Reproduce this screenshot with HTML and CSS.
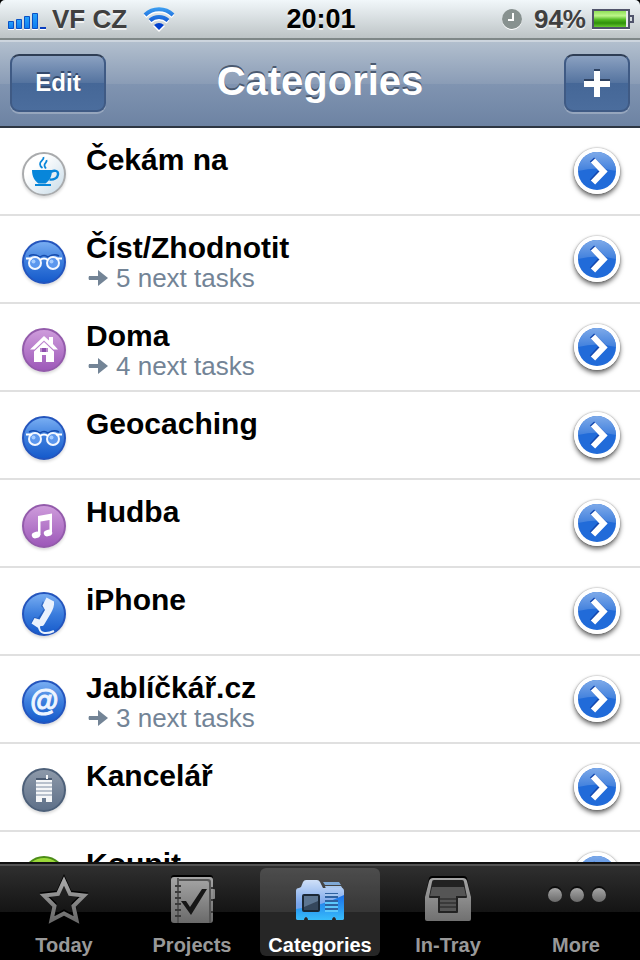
FILE: index.html
```html
<!DOCTYPE html>
<html lang="en">
<head>
  <meta charset="utf-8">
  <meta name="viewport" content="width=device-width, initial-scale=1">
  <title>Categories</title>
  <link rel="stylesheet" href="styles.css">
</head>
<body>
  <!-- shared icons -->
  <svg class="defs" aria-hidden="true">
    <defs>
      <linearGradient id="g-gray" x1="0" y1="0" x2="0" y2="1">
        <stop offset="0" stop-color="#a6a6a6"/><stop offset="1" stop-color="#6a6a6a"/>
      </linearGradient>
      <linearGradient id="g-tray" gradientUnits="userSpaceOnUse" x1="0" y1="3" x2="0" y2="49">
        <stop offset="0" stop-color="#a6a6a6"/><stop offset="1" stop-color="#6e6e6e"/>
      </linearGradient>
      <linearGradient id="g-blue" x1="0" y1="0" x2="0" y2="1">
        <stop offset="0" stop-color="#7bb0f3"/><stop offset=".5" stop-color="#3b7ddd"/><stop offset="1" stop-color="#1459ca"/>
      </linearGradient>
      <linearGradient id="g-purple" x1="0" y1="0" x2="0" y2="1">
        <stop offset="0" stop-color="#cf9ddc"/><stop offset="1" stop-color="#9c57b8"/>
      </linearGradient>
      <linearGradient id="g-white" x1="0" y1="0" x2="1" y2="1">
        <stop offset=".3" stop-color="#ffffff"/><stop offset="1" stop-color="#c6dae7"/>
      </linearGradient>
      <linearGradient id="g-slate" x1="0" y1="0" x2="0" y2="1">
        <stop offset="0" stop-color="#8e9aaa"/><stop offset="1" stop-color="#5d6f88"/>
      </linearGradient>
      <linearGradient id="g-green" x1="0" y1="0" x2="0" y2="1">
        <stop offset="0" stop-color="#a3de3d"/><stop offset="1" stop-color="#4c9a12"/>
      </linearGradient>
      <linearGradient id="g-signal" x1="0" y1="0" x2="0" y2="1">
        <stop offset="0" stop-color="#29a3fb"/><stop offset="1" stop-color="#0b7cf0"/>
      </linearGradient>
      <linearGradient id="g-wifi" gradientUnits="userSpaceOnUse" x1="0" y1="0" x2="0" y2="24">
        <stop offset="0" stop-color="#3fa5f3"/><stop offset="1" stop-color="#0038c8"/>
      </linearGradient>
      <linearGradient id="g-battery" x1="0" y1="0" x2="0" y2="1">
        <stop offset="0" stop-color="#8fe058"/><stop offset=".3" stop-color="#bdf58a"/><stop offset=".55" stop-color="#4fb81e"/><stop offset=".75" stop-color="#2f8f0b"/><stop offset="1" stop-color="#66c92f"/>
      </linearGradient>
      <linearGradient id="g-folder" x1="0" y1="0" x2="0" y2="1">
        <stop offset="0" stop-color="#cfe0f8"/><stop offset=".6" stop-color="#79a5ea"/><stop offset="1" stop-color="#6d9fe9"/>
      </linearGradient>
      <linearGradient id="g-gloss" x1="0" y1="0" x2="0" y2="1">
        <stop offset="0" stop-color="#1b70e8"/><stop offset="1" stop-color="#38bdfb"/>
      </linearGradient>
      <linearGradient id="g-disc" x1="0" y1="0" x2="0" y2="1">
        <stop offset="0" stop-color="#7eaae9"/><stop offset="1" stop-color="#4180dd"/>
      </linearGradient>
    </defs>

    <symbol id="cup" viewBox="0 0 44 44">
      <circle cx="22" cy="22" r="21" fill="url(#g-white)" stroke="#a9abad" stroke-width="2"/>
      <path fill="#0786da" d="M10 18h20c0 7-3 11-6.500 13.500h-7C13 29 10 25 10 18zM13 32h16v2H13z"/>
      <path fill="none" stroke="#0786da" stroke-width="2.400" d="M29 20c4-2.500 7.500-1 7 2.500s-4 5.500-8.500 5"/>
      <path fill="none" stroke="#0786da" stroke-width="1.800" d="M21.500 5c1 3-4 4-3.500 7 0 2 1 3 2.500 4M24.500 8c1 2.500-2.500 3-2 5.500 0 1.500.800 2 1.500 3"/>
    </symbol>

    <symbol id="glasses" viewBox="0 0 44 44">
      <circle cx="22" cy="22" r="21" fill="url(#g-blue)" stroke="#2455bd" stroke-width="2"/>
      <path fill="none" stroke="#164cae" stroke-width="1.500" d="M7 16q5-3 11 1 4-3 8 0 6-4 11-1"/>
      <g fill="#5b97ee" stroke="#f2f7ff" stroke-width="2">
        <circle cx="13" cy="23" r="6"/>
        <circle cx="31" cy="23" r="6"/>
      </g>
      <path fill="none" stroke="#fff" stroke-width="1.800" d="M4 18.500h6M34 18.500h6M18 20q4-3 8 0"/>
      <circle cx="11.500" cy="21.500" r="2" fill="#a5ccff"/><circle cx="29.500" cy="21.500" r="2" fill="#a5ccff"/>
    </symbol>

    <symbol id="house" viewBox="0 0 44 44">
      <circle cx="22" cy="22" r="21" fill="url(#g-purple)" stroke="#935bab" stroke-width="2"/>
      <path fill="#fff" d="M22 8l5 4.500V9h4v7l5 5.500h-4.500L22 12.500l-9.500 9H8z"/>
      <path fill="#fff" d="M22 14l10 9.500V34h-8v-7h-4v7h-8V23.500z"/>
      <path fill="#b98acb" d="M18 20h8v4h-8z"/>
      <path fill="#8f4fae" d="M20 20h4v4h-4z"/>
    </symbol>

    <symbol id="note" viewBox="0 0 44 44">
      <circle cx="22" cy="22" r="21" fill="url(#g-purple)" stroke="#935bab" stroke-width="2"/>
      <path fill="#fff" d="M16 12l14-2.500V29h-2.500V16l-9 1.500V31H16z"/>
      <ellipse cx="14" cy="31" rx="4.300" ry="3.200" fill="#fff" transform="rotate(-15 14 31)"/>
      <ellipse cx="26" cy="29" rx="4.300" ry="3.200" fill="#fff" transform="rotate(-15 26 29)"/>
    </symbol>

    <symbol id="phone" viewBox="0 0 44 44">
      <circle cx="22" cy="22" r="21" fill="url(#g-blue)" stroke="#2455bd" stroke-width="2"/>
      <path fill="#164cae" d="M21 9l-2 5 3 3-6 9-4-1-3 6 4 1 5-4 6-12z" opacity=".6"/>
      <path fill="#eaf2fd" d="M24.500 5.500L32 9.500c.500 4-1 8-3 11.500l-6.500 11c-1 2-2.500 2.300-4 2L17 36.500l-7.500-5 3-5.500 5 1.500L23 18l-2.500-4.500z"/>
      <path fill="none" stroke="#eaf2fd" stroke-width="2" d="M17 35c.500 6 6 8 15 4"/>
    </symbol>

    <symbol id="at" viewBox="0 0 44 44">
      <circle cx="22" cy="22" r="21" fill="url(#g-blue)" stroke="#2455bd" stroke-width="2"/>
      <text class="at-sign" x="22" y="31" text-anchor="middle">@</text>
    </symbol>

    <symbol id="office" viewBox="0 0 44 44">
      <circle cx="22" cy="22" r="21" fill="url(#g-slate)" stroke="#4d6079" stroke-width="2"/>
      <path fill="#4c5c72" d="M14 10h16v2H14z"/>
      <path fill="#b8c1cd" d="M14 12h16v18H14z"/>
      <path fill="#f4f6f8" d="M24 7h2v4h-2zM14 12h16v2H14zM14 16h16v2H14zM14 20h16v2H14zM14 24h16v2H14zM14 28h16v6h-6v-4h-4v4h-6z"/>
    </symbol>

    <symbol id="cart" viewBox="0 0 44 44">
      <circle cx="22" cy="22" r="21" fill="url(#g-green)" stroke="#4b8c17" stroke-width="2"/>
      <path fill="none" stroke="#fff" stroke-width="2" d="M9 14h5l4 14h13l4-11H15"/>
    </symbol>

    <symbol id="arrow" viewBox="0 0 20 16">
      <path fill="#738496" d="M1 6h9V0l10 8-10 8v-6H1q-1-2 0-4z"/>
    </symbol>

    <symbol id="chevron" viewBox="0 0 46 46">
      <circle cx="23" cy="23" r="23" fill="#fff"/>
      <circle cx="23" cy="23" r="19" fill="#216bd9"/>
      <path fill="url(#g-disc)" d="M4 23a19 19 0 0 1 38 0q-19-5-38 0z"/>
      <path fill="none" stroke="#1549b0" stroke-width="6" d="M18 11.500L28.500 22 18 33.500"/>
      <path fill="none" stroke="#fff" stroke-width="6" d="M19 12.500L29.500 23.500 19 34.500"/>
    </symbol>
  </svg>

  <header class="status">
    <div class="status-left">
      <svg class="signal" viewBox="0 0 38 17" role="img" aria-label="Signal">
        <path fill="#fff" d="M0 16h6v1H0zM8 16h6v1H8zM16 16h6v1h-6zM24 16h6v1h-6zM32 16h6v1h-6z"/>
        <g fill="url(#g-signal)" stroke="#0a51c5">
          <path d="M.500 8.500h5v7h-5z"/><path d="M8.500 6.500h5v9h-5z"/><path d="M16.500 3.500h5v12h-5z"/><path d="M24.500.500h5v15h-5z"/>
        </g>
        <path fill="#0a3fc0" d="M32 14h6v2h-6z"/>
      </svg>
      <span>VF CZ</span>
      <svg class="wifi" viewBox="0 0 32 26" role="img" aria-label="Wi-Fi">
        <g fill="none" stroke="#fff" stroke-width="4"><path d="M2 10.500a20 20 0 0 1 28 0M7 16a13 13 0 0 1 18 0"/></g>
        <path fill="#fff" d="M10 20q6-5 12 0l-6 6z"/>
        <g fill="none" stroke="url(#g-wifi)" stroke-width="4"><path d="M2 9a20 20 0 0 1 28 0M7 14.500a13 13 0 0 1 18 0"/></g>
        <path fill="#003fce" d="M11 19q5-4 10 0l-5 5z"/>
      </svg>
    </div>
    <span class="time">20:01</span>
    <div class="status-right">
      <svg class="clock" viewBox="0 0 20 21" role="img" aria-label="Alarm">
        <circle cx="10" cy="11" r="10" fill="#fff"/>
        <circle cx="10" cy="10" r="10" fill="#87918f"/>
        <path fill="none" stroke="#fff" stroke-width="2" d="M11 4v7H6"/>
      </svg>
      <span>94%</span>
      <svg class="battery" viewBox="0 0 42 21" role="img" aria-label="Battery">
        <path fill="#fff" d="M0 19h38v2H0z"/>
        <path fill="#50546b" d="M0 0h38v6h4v8h-4v6H0zM38 8v4h2V8z"/>
        <path fill="#e8e8ee" d="M2 2h34v16H2z"/>
        <path fill="url(#g-battery)" d="M2 2h32v16H2z"/>
      </svg>
    </div>
  </header>

  <nav class="navbar">
    <button class="nav-btn edit" type="button">Edit</button>
    <h1>Categories</h1>
    <button class="nav-btn add" type="button" aria-label="Add category">
      <svg viewBox="0 0 26 28">
        <path fill="#2e4261" d="M10 0h6v10h10v6H16v10h-6V16H0v-6h10z"/>
        <path fill="#fff" d="M10 2h6v10h10v6H16v10h-6V18H0v-6h10z"/>
      </svg>
    </button>
  </nav>

  <main>
    <ul class="list">
      <li>
        <svg class="icon"><use href="#cup"/></svg>
        <div class="info"><h2>Čekám na</h2></div>
        <button class="more" type="button" aria-label="Open Čekám na"><svg><use href="#chevron"/></svg></button>
      </li>
      <li>
        <svg class="icon"><use href="#glasses"/></svg>
        <div class="info"><h2>Číst/Zhodnotit</h2><p><svg><use href="#arrow"/></svg>5 next tasks</p></div>
        <button class="more" type="button" aria-label="Open Číst/Zhodnotit"><svg><use href="#chevron"/></svg></button>
      </li>
      <li>
        <svg class="icon"><use href="#house"/></svg>
        <div class="info"><h2>Doma</h2><p><svg><use href="#arrow"/></svg>4 next tasks</p></div>
        <button class="more" type="button" aria-label="Open Doma"><svg><use href="#chevron"/></svg></button>
      </li>
      <li>
        <svg class="icon"><use href="#glasses"/></svg>
        <div class="info"><h2>Geocaching</h2></div>
        <button class="more" type="button" aria-label="Open Geocaching"><svg><use href="#chevron"/></svg></button>
      </li>
      <li>
        <svg class="icon"><use href="#note"/></svg>
        <div class="info"><h2>Hudba</h2></div>
        <button class="more" type="button" aria-label="Open Hudba"><svg><use href="#chevron"/></svg></button>
      </li>
      <li>
        <svg class="icon"><use href="#phone"/></svg>
        <div class="info"><h2>iPhone</h2></div>
        <button class="more" type="button" aria-label="Open iPhone"><svg><use href="#chevron"/></svg></button>
      </li>
      <li>
        <svg class="icon"><use href="#at"/></svg>
        <div class="info"><h2>Jablíčkář.cz</h2><p><svg><use href="#arrow"/></svg>3 next tasks</p></div>
        <button class="more" type="button" aria-label="Open Jablíčkář.cz"><svg><use href="#chevron"/></svg></button>
      </li>
      <li>
        <svg class="icon"><use href="#office"/></svg>
        <div class="info"><h2>Kancelář</h2></div>
        <button class="more" type="button" aria-label="Open Kancelář"><svg><use href="#chevron"/></svg></button>
      </li>
      <li>
        <svg class="icon"><use href="#cart"/></svg>
        <div class="info"><h2>Koupit</h2></div>
        <button class="more" type="button" aria-label="Open Koupit"><svg><use href="#chevron"/></svg></button>
      </li>
    </ul>
  </main>

  <footer class="tabs">
    <a href="#today">
      <svg viewBox="0 0 56 52">
        <path fill="none" stroke="#000" stroke-width="4" d="M28 5l6 13.500 14 1.500-10.500 10 3 14.500L28 37.500 15.500 44.500l3-14.500L8 20l14-1.500z"/>
        <path fill="none" stroke="url(#g-gray)" stroke-width="4" d="M28 7l6 13 14 1.500-10.500 10.500 3 14L28 39.500 15.500 46l3-14L8 21.500l14-1.500z"/>
      </svg>
      <span>Today</span>
    </a>
    <a href="#projects">
      <svg viewBox="0 0 56 52">
        <rect x="7" y="1" width="42" height="46" rx="3" fill="#000"/>
        <path fill="#858585" d="M48 15h2q1 0 1 1v8q0 1-1 1h-2z"/>
        <rect x="7" y="3" width="42" height="46" rx="3" fill="url(#g-gray)"/>
        <path fill="#555" d="M13 4h2v45h-2zM15 5h29q3 0 3 3v41h-2V9q0-2-2-2H15z"/>
        <path fill="#3b3b3b" d="M11 11h6v2h-6zM11 17h6v2h-6zM11 23h6v2h-6zM11 29h6v2h-6zM11 35h6v2h-6zM11 41h6v2h-6zM47 13h2v2h-2zM47 25h2v2h-2zM47 37h2v2h-2z"/>
        <path fill="#161616" d="M17 27h5l4 6 12-18h5L27 41z"/>
      </svg>
      <span>Projects</span>
    </a>
    <a href="#categories" class="active">
      <svg viewBox="0 0 56 52">
        <path fill="#7fa9d6" d="M31 8h16l2 3H33z"/>
        <path fill="#a9c8ee" d="M33 12h16l2 3H34z"/>
        <path fill="url(#g-folder)" d="M4 17q0-3 3-3l2-1 2-5q1-2 3-2h11q2 0 3 2l3 6h18q3 0 3 3v27q0 2-2 2h-6q0-3-2-3t-2 3H16q0-3-2-3t-2 3H6q-2 0-2-2z"/>
        <path fill="url(#g-gloss)" d="M4 35q26-3 48-14v23q0 2-2 2h-6q0-3-2-3t-2 3H16q0-3-2-3t-2 3H6q-2 0-2-2z"/>
        <rect x="11" y="21" width="16" height="16" rx="1" fill="#35475c" stroke="#1b2836" stroke-width="2"/>
        <path fill="#5c7591" d="M12 22h14v5L12 33z"/>
        <path fill="#2f62a0" d="M33 19h13v1H33zM33 22h13v2H33zM33 26h13v2H33zM33 30h13v2H33zM33 34h13v2H33z"/>
        <path fill="#a5c5ef" d="M33 20h13v2H33z"/>
        <path fill="#5cc8fb" d="M33 28h13v2H33zM33 32h13v2H33zM33 36h13v2H33z"/>
      </svg>
      <span>Categories</span>
    </a>
    <a href="#in-tray">
      <svg viewBox="0 0 56 52">
        <path fill="#000" d="M12 2h32q2 0 3 2l4 19H5l4-19q1-2 3-2z"/>
        <path fill="url(#g-tray)" d="M13 4h30q3 0 4 3l4 16v22q0 2-2 2H7q-2 0-2-2V23L9 7q1-3 4-3z"/>
        <path fill="#222" d="M14 6h28q2 0 2 2l3 15q0 1-1 1h-8v14q0 1-1 1H19q-1 0-1-1V24h-8q-1 0-1-1l3-15q0-2 2-2z"/>
        <path fill="#555" d="M12 13h32l2 9H36v15H20V22H10z"/>
        <path fill="#3a3a3a" d="M20 24h16v2H20zM20 28h16v2H20zM20 32h16v2H20z"/>
      </svg>
      <span>In-Tray</span>
    </a>
    <a href="#more">
      <svg viewBox="0 0 56 52" class="dots">
        <g fill="#0c0c0c"><circle cx="7" cy="19" r="7"/><circle cx="29" cy="19" r="7"/><circle cx="51" cy="19" r="7"/></g>
        <g fill="url(#g-gray)"><circle cx="7" cy="21" r="7"/><circle cx="29" cy="21" r="7"/><circle cx="51" cy="21" r="7"/></g>
      </svg>
      <span>More</span>
    </a>
  </footer>
</body>
</html>
```

FILE: styles.css
```css
* { box-sizing: border-box; }
body { margin: 0; height: 100vh; display: flex; flex-direction: column; background: #000; font-family: "Liberation Sans", Arial, sans-serif; overflow: hidden; }
h1, h2, p, ul { margin: 0; padding: 0; }
svg { display: block; flex: none; overflow: visible; }
button { border: none; padding: 0; font-family: inherit; cursor: pointer; }
.defs { position: absolute; width: 0; height: 0; }

/* status bar */
.status { flex: none; display: grid; grid-template-columns: 1fr auto 1fr; align-items: center; height: 40px; padding: 0 6px 0 8px; border-bottom: 2px solid #7f8888; border-radius: 5px 5px 0 0; background: linear-gradient(#f1f7fa, #bdc4c6); color: #404040; font-size: 26px; font-weight: bold; line-height: 38px; text-shadow: 0 2px 0 rgba(255, 255, 255, 0.7); }
.status-left, .status-right { display: flex; align-items: center; }
.status-left { gap: 6px; }
.status-right { justify-content: flex-end; gap: 6px; }
.status-right span { margin-left: 6px; }
.time { color: #000; font-size: 27px; }
.signal { width: 38px; height: 17px; margin-top: 4px; }
.wifi { width: 32px; height: 26px; margin-left: 10px; }
.clock { width: 20px; height: 21px; }
.battery { width: 42px; height: 21px; }

/* navigation bar */
.navbar { flex: none; display: grid; grid-template-columns: 1fr auto 1fr; align-items: center; height: 88px; padding: 0 10px 2px; border-top: 2px solid #cdd5de; border-bottom: 2px solid #2d3642; background: linear-gradient(#b2bfce, #8a9cb6 50%, #8094b1 50%, #6d83a3); }
h1 { color: #fff; font-size: 40px; line-height: 48px; text-shadow: 0 -2px 0 #4b5a70; margin-bottom: 4px; }
.nav-btn { height: 58px; border-radius: 9px; border: 2px solid #3f5a84; border-top-color: #2f3e55; background: linear-gradient(#8ba1c1, #54739f 50%, #456797 50%, #4b6d9d); box-shadow: 0 2px 0 rgba(255, 255, 255, 0.25); color: #fff; font-size: 24px; font-weight: bold; text-shadow: 0 -2px 0 #34496b; }
.edit { width: 96px; }
.add { width: 66px; justify-self: end; display: flex; align-items: center; justify-content: center; }
.add svg { width: 26px; height: 28px; }

/* category list */
main { flex: 1; min-height: 0; overflow: hidden; background: #fff; }
.list { list-style: none; }
.list li { display: flex; align-items: flex-start; height: 88px; padding: 0 20px 0 22px; border-bottom: 2px solid #e0e0e0; }
.icon { width: 44px; height: 44px; margin-top: 24px; border-radius: 50%; box-shadow: 0 2px 3px rgba(0, 0, 0, 0.15); }
.at-sign { fill: #eef5ff; stroke: #eef5ff; stroke-width: 1px; font-size: 29px; font-weight: bold; font-style: italic; }
.info { flex: 1; padding: 15px 0 0 20px; }
.info h2 { font-size: 30px; line-height: 34px; color: #000; }
.info p { display: flex; align-items: center; gap: 8px; padding-left: 2px; color: #738496; font-size: 26px; line-height: 26px; }
.info p svg { width: 20px; height: 16px; }
.more { width: 46px; height: 46px; margin-top: 20px; border-radius: 50%; background: #fff; box-shadow: 0 3px 5px rgba(0, 0, 0, 0.6), 0 0 2px rgba(0, 0, 0, 0.4); }
.more svg { width: 46px; height: 46px; }

/* tab bar */
.tabs { flex: none; display: flex; height: 98px; border-top: 2px solid #111; background: linear-gradient(#535353 2px, #2f2f2f 2px, #141414 48px, #000 48px); }
.tabs a { flex: 1; display: flex; flex-direction: column; align-items: center; margin: 4px; padding-top: 6px; border-radius: 6px; color: #999; font-size: 20px; font-weight: bold; line-height: 24px; text-decoration: none; }
.tabs svg { width: 56px; height: 52px; margin-bottom: 7px; }
.tabs .active { background: rgba(255, 255, 255, 0.15); color: #fff; }
```
